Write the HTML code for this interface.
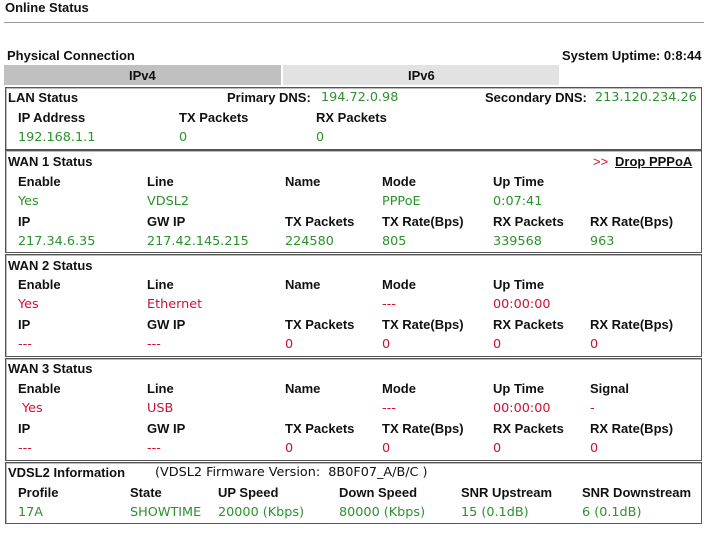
<!DOCTYPE html>
<html><head><meta charset="utf-8"><style>
body{margin:0;width:709px;height:535px;background:#fff;position:relative;overflow:hidden;font-family:"Liberation Sans",Arial,sans-serif;}
.a{position:absolute;white-space:nowrap;line-height:16px;}
.b{font-weight:bold;font-size:13px;color:#111;}
.t{font-weight:bold;font-size:13px;color:#111;}
.g{font-family:"DejaVu Sans",Verdana,sans-serif;font-size:12.8px;color:#2a922a;}
.r{font-family:"DejaVu Sans",Verdana,sans-serif;font-size:12.8px;color:#cc1133;}
.k{font-family:"DejaVu Sans",Verdana,sans-serif;font-size:12.8px;color:#111;}
.box{position:absolute;left:5px;width:695px;border:1px solid #555;box-shadow:inset 1px 1px 0 #bbb;}
</style></head><body>
<div class="a b" style="left:5px;top:0px">Online Status</div>
<div style="position:absolute;left:4px;top:22px;width:700px;height:1px;background:#999"></div>
<div class="a b" style="left:7px;top:48px">Physical Connection</div>
<div class="a b" style="left:562px;top:48px">System Uptime: 0:8:44</div>
<div style="position:absolute;left:4px;top:65px;width:277px;height:20px;background:#c0c0c0"></div>
<div style="position:absolute;left:283px;top:65px;width:276px;height:20px;background:#e2e2e2"></div>
<div class="a b" style="left:129px;top:68px">IPv4</div>
<div class="a b" style="left:408px;top:68px">IPv6</div>

<div class="box" style="top:87px;height:61px"></div>
<div class="box" style="top:150px;height:101px"></div>
<div class="box" style="top:254px;height:101px"></div>
<div class="box" style="top:358px;height:101px"></div>
<div class="box" style="top:462px;height:60px"></div>

<div class="a t" style="left:8px;top:90px">LAN Status</div>
<div class="a b" style="left:227px;top:90px">Primary DNS:</div>
<div class="a g" style="left:321px;top:90px">194.72.0.98</div>
<div class="a b" style="left:485px;top:90px">Secondary DNS:</div>
<div class="a g" style="left:595px;top:90px">213.120.234.26</div>
<div class="a b" style="left:18px;top:110px">IP Address</div>
<div class="a b" style="left:179px;top:110px">TX Packets</div>
<div class="a b" style="left:316px;top:110px">RX Packets</div>
<div class="a g" style="left:18px;top:130px">192.168.1.1</div>
<div class="a g" style="left:179px;top:130px">0</div>
<div class="a g" style="left:316px;top:130px">0</div>

<div class="a t" style="left:8px;top:154px">WAN 1 Status</div>
<div class="a" style="left:593px;top:154px;font-size:13px;color:#cc1133">&gt;&gt;</div>
<div class="a b" style="left:615px;top:154px;text-decoration:underline">Drop PPPoA</div>
<div class="a b" style="left:18px;top:174px">Enable</div><div class="a b" style="left:147px;top:174px">Line</div><div class="a b" style="left:285px;top:174px">Name</div><div class="a b" style="left:382px;top:174px">Mode</div><div class="a b" style="left:493px;top:174px">Up Time</div>
<div class="a g" style="left:18px;top:194px">Yes</div><div class="a g" style="left:147px;top:194px">VDSL2</div><div class="a g" style="left:382px;top:194px">PPPoE</div><div class="a g" style="left:493px;top:194px">0:07:41</div>
<div class="a b" style="left:18px;top:214px">IP</div><div class="a b" style="left:147px;top:214px">GW IP</div><div class="a b" style="left:285px;top:214px">TX Packets</div><div class="a b" style="left:382px;top:214px">TX Rate(Bps)</div><div class="a b" style="left:493px;top:214px">RX Packets</div><div class="a b" style="left:590px;top:214px">RX Rate(Bps)</div>
<div class="a g" style="left:18px;top:234px">217.34.6.35</div><div class="a g" style="left:147px;top:234px">217.42.145.215</div><div class="a g" style="left:285px;top:234px">224580</div><div class="a g" style="left:382px;top:234px">805</div><div class="a g" style="left:493px;top:234px">339568</div><div class="a g" style="left:590px;top:234px">963</div>

<div class="a t" style="left:8px;top:258px">WAN 2 Status</div>
<div class="a b" style="left:18px;top:277px">Enable</div><div class="a b" style="left:147px;top:277px">Line</div><div class="a b" style="left:285px;top:277px">Name</div><div class="a b" style="left:382px;top:277px">Mode</div><div class="a b" style="left:493px;top:277px">Up Time</div>
<div class="a r" style="left:18px;top:297px">Yes</div><div class="a r" style="left:147px;top:297px">Ethernet</div><div class="a r" style="left:382px;top:297px">---</div><div class="a r" style="left:493px;top:297px">00:00:00</div>
<div class="a b" style="left:18px;top:317px">IP</div><div class="a b" style="left:147px;top:317px">GW IP</div><div class="a b" style="left:285px;top:317px">TX Packets</div><div class="a b" style="left:382px;top:317px">TX Rate(Bps)</div><div class="a b" style="left:493px;top:317px">RX Packets</div><div class="a b" style="left:590px;top:317px">RX Rate(Bps)</div>
<div class="a r" style="left:18px;top:337px">---</div><div class="a r" style="left:147px;top:337px">---</div><div class="a r" style="left:285px;top:337px">0</div><div class="a r" style="left:382px;top:337px">0</div><div class="a r" style="left:493px;top:337px">0</div><div class="a r" style="left:590px;top:337px">0</div>

<div class="a t" style="left:8px;top:361px">WAN 3 Status</div>
<div class="a b" style="left:18px;top:381px">Enable</div><div class="a b" style="left:147px;top:381px">Line</div><div class="a b" style="left:285px;top:381px">Name</div><div class="a b" style="left:382px;top:381px">Mode</div><div class="a b" style="left:493px;top:381px">Up Time</div><div class="a b" style="left:590px;top:381px">Signal</div>
<div class="a r" style="left:22px;top:401px">Yes</div><div class="a r" style="left:147px;top:401px">USB</div><div class="a r" style="left:382px;top:401px">---</div><div class="a r" style="left:493px;top:401px">00:00:00</div><div class="a r" style="left:590px;top:401px">-</div>
<div class="a b" style="left:18px;top:421px">IP</div><div class="a b" style="left:147px;top:421px">GW IP</div><div class="a b" style="left:285px;top:421px">TX Packets</div><div class="a b" style="left:382px;top:421px">TX Rate(Bps)</div><div class="a b" style="left:493px;top:421px">RX Packets</div><div class="a b" style="left:590px;top:421px">RX Rate(Bps)</div>
<div class="a r" style="left:18px;top:441px">---</div><div class="a r" style="left:147px;top:441px">---</div><div class="a r" style="left:285px;top:441px">0</div><div class="a r" style="left:382px;top:441px">0</div><div class="a r" style="left:493px;top:441px">0</div><div class="a r" style="left:590px;top:441px">0</div>

<div class="a b" style="left:8px;top:465px">VDSL2 Information</div>
<div class="a k" style="left:155px;top:465px">(VDSL2 Firmware Version:&nbsp; 8B0F07_A/B/C )</div>
<div class="a b" style="left:18px;top:485px">Profile</div><div class="a b" style="left:130px;top:485px">State</div><div class="a b" style="left:218px;top:485px">UP Speed</div><div class="a b" style="left:339px;top:485px">Down Speed</div><div class="a b" style="left:461px;top:485px">SNR Upstream</div><div class="a b" style="left:582px;top:485px">SNR Downstream</div>
<div class="a g" style="left:18px;top:505px">17A</div><div class="a g" style="left:130px;top:505px">SHOWTIME</div><div class="a g" style="left:218px;top:505px">20000 (Kbps)</div><div class="a g" style="left:339px;top:505px">80000 (Kbps)</div><div class="a g" style="left:461px;top:505px">15 (0.1dB)</div><div class="a g" style="left:582px;top:505px">6 (0.1dB)</div>
</body></html>
